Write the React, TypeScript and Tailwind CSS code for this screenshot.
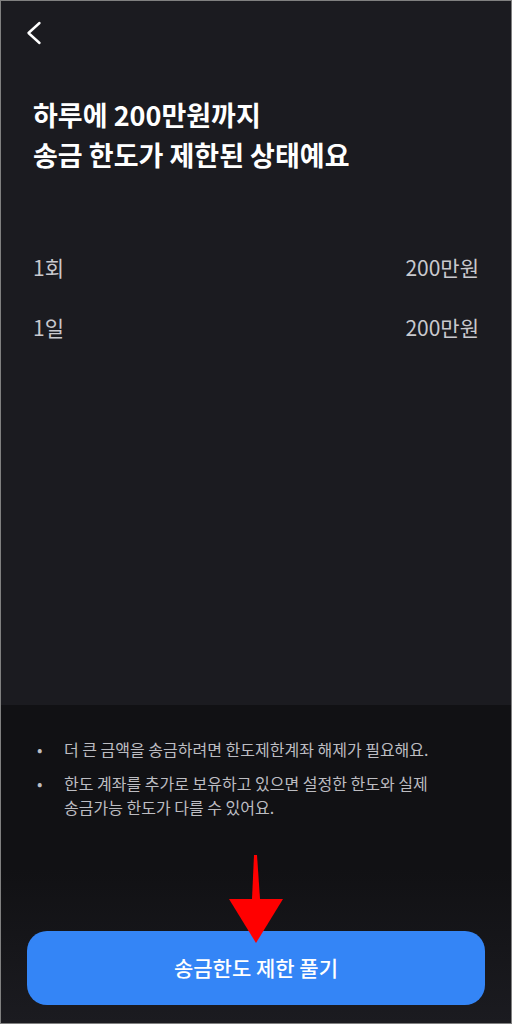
import React from "react";

export default function App() {
  const font = { fontFamily: '"Noto Sans CJK KR", "Noto Sans", sans-serif' };
  return (
    <div
      className="relative w-[512px] h-[1024px] border border-[#808080] bg-[#1b1b20] flex flex-col overflow-hidden"
      style={font}
    >
      {/* header */}
      <div className="pt-[18px] pl-[23px]">
        <svg width="20" height="28" viewBox="0 0 20 28" fill="none">
          <polyline
            points="15.5,4 4.5,14 15.5,24"
            stroke="#ffffff"
            strokeWidth="2.4"
            strokeLinecap="round"
            strokeLinejoin="round"
          />
        </svg>
      </div>

      {/* title */}
      <div className="mt-[48px] px-[32px] text-white text-[27px] leading-[40px] font-semibold">
        <div>하루에 200만원까지</div>
        <div>송금 한도가 제한된 상태예요</div>
      </div>

      {/* rows */}
      <div className="mt-[63px] px-[32px] text-[21px] text-[#c9c9ce]">
        <div className="h-[60px] flex items-center justify-between">
          <span>1회</span>
          <span>200만원</span>
        </div>
        <div className="h-[60px] flex items-center justify-between">
          <span>1일</span>
          <span>200만원</span>
        </div>
      </div>

      <div className="flex-1" />

      {/* footer */}
      <div className="h-[318px] bg-[#111114] flex flex-col">
        <ul className="pt-[32px] pl-[36px] pr-[20px] flex flex-col gap-[10px] text-[16px] leading-[24px] text-[#bdbdc2]">
          <li className="flex">
            <span className="w-[27px] shrink-0">•</span>
            <span>더 큰 금액을 송금하려면 한도제한계좌 해제가 필요해요.</span>
          </li>
          <li className="flex">
            <span className="w-[27px] shrink-0">•</span>
            <span>
              한도 계좌를 추가로 보유하고 있으면 설정한 한도와 실제
              <br />
              송금가능 한도가 다를 수 있어요.
            </span>
          </li>
        </ul>
        <div className="flex-1" />
        <div className="pt-[61px] pb-[18px] px-[26px] bg-gradient-to-b from-[#111114] to-[#1b1b20]">
          <button className="w-full h-[74px] rounded-[20px] bg-[#3485f6] text-white text-[21px] font-medium flex items-center justify-center">
            송금한도 제한 풀기
          </button>
        </div>
      </div>

      {/* red arrow annotation */}
      <svg
        className="absolute left-[227px] top-[853px]"
        width="58"
        height="92"
        viewBox="0 0 58 92"
      >
        <polygon points="26,1 29,1 32,45 24,45" fill="#ff0000" />
        <polygon points="1,45 55,45 28,89" fill="#ff0000" />
      </svg>
    </div>
  );
}
